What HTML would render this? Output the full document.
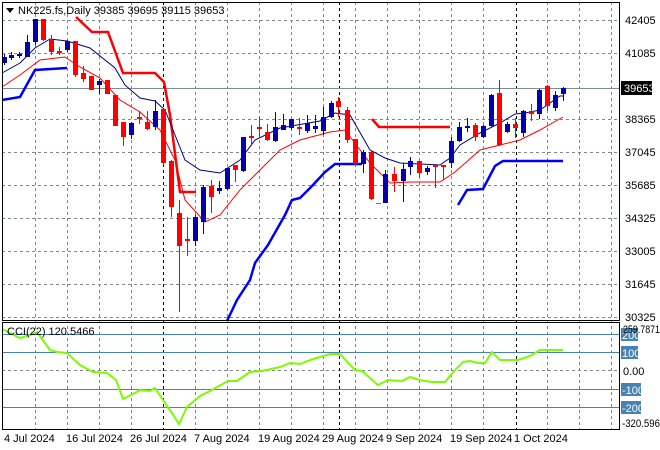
<!DOCTYPE html>
<html><head><meta charset="utf-8"><style>
html,body{margin:0;padding:0;background:#fff;width:660px;height:450px;overflow:hidden}
svg text{font-family:"Liberation Sans",sans-serif;font-size:11px;fill:#000}
</style></head><body>
<svg id="s" width="660" height="450" xmlns="http://www.w3.org/2000/svg">
<rect width="660" height="450" fill="#fff"/>
<g id="grid" stroke="#7d8791" stroke-dasharray="3,3" stroke-width="1"></g>
<g stroke="#000" stroke-dasharray="3,3" stroke-width="1">
<line x1="163.5" y1="2" x2="163.5" y2="429"/><line x1="339.5" y1="2" x2="339.5" y2="429"/><line x1="516.5" y1="2" x2="516.5" y2="429"/>
</g>
<line x1="2" y1="88.5" x2="619" y2="88.5" stroke="#7d8a99" stroke-width="1"/>
<g stroke="#4682b4" stroke-width="1">
<line x1="2" y1="334.5" x2="619" y2="334.5"/><line x1="2" y1="352.5" x2="619" y2="352.5"/><line x1="2" y1="389.5" x2="619" y2="389.5"/><line x1="2" y1="407.5" x2="619" y2="407.5"/>
</g>
<polyline fill="none" stroke="#ff0000" stroke-width="2.5" points="76,17 92,32 108,32 123,73 155,73 164,82 170,115 180,192 196,192"/>
<polyline fill="none" stroke="#ff0000" stroke-width="2.5" points="372,119 379,127 450,127"/>
<polyline fill="none" stroke="#0000ff" stroke-width="2.5" points="2,100 20,97 35,70 67,68"/>
<polyline fill="none" stroke="#0000ff" stroke-width="2.5" points="227,321 237,300 250,280 255,263 268,245 285,215 292,200 300,198 312,186 325,172 335,164 362,164"/>
<polyline fill="none" stroke="#0000ff" stroke-width="2.5" points="458,205 467,190 483,189 495,166 503,161 563,161"/>
<polyline fill="none" stroke="#000080" stroke-width="1" points="2,73 20,63 35,48 50,39 67,41 90,48 115,68 125,85 140,98 155,101 165,110 175,135 185,160 200,170 220,173 240,160 255,140 280,128 320,121 335,113 350,115 370,150 385,158 400,163 440,165 450,158 460,145 480,133 500,123 515,114 525,113 540,110 560,96 563,96"/>
<polyline fill="none" stroke="#ff0000" stroke-width="1" points="2,87 20,75 40,60 65,57 80,67 100,78 120,100 140,112 160,130 175,160 185,200 205,222 220,215 240,190 260,170 280,150 300,140 330,132 345,130 370,163 390,183 410,182 440,182 455,172 480,150 500,145 520,140 540,130 563,117"/>
<g id="c"></g>
<line x1="376" y1="203.5" x2="381" y2="203.5" stroke="#00cc00"/>
<polyline fill="none" stroke="#7cfc00" stroke-width="2" points="2,329 20,338 30,335 37,332 50,350 57,352 67,353 80,365 93,372 107,373 116,380 123,399 133,394 140,390 150,391 155,388 163,400 172,413 179,424 187,407 200,396 210,391 228,381 237,381 250,372 262,371 280,367 290,363 300,364 310,360 320,357 330,354 340,354 355,370 362,371 378,385 388,380 402,381 410,377 420,380 432,382 445,382 455,370 463,362 470,361 478,363 485,363 492,352 500,360 518,360 530,356 540,350 563,350"/>
<g fill="none" stroke="#000" stroke-width="1">
<rect x="2.5" y="2.5" width="617" height="318"/>
<rect x="2.5" y="322.5" width="617" height="107"/>
</g>
<polygon points="6,8 14,8 10,13" fill="#000"/>
<text x="18" y="14">NK225.fs,Daily  39385 39695 39115 39653</text>
<text x="7" y="335">CCI(22) 120.5466</text>
<g id="ax"></g>
<rect x="621" y="81" width="31" height="14" fill="#000"/>
<text x="624" y="92" style="fill:#fff">39653</text>
<g fill="#4682b4"><rect x="621" y="328" width="17" height="13"/><rect x="621" y="346" width="17" height="13"/><rect x="621" y="383" width="20" height="13"/><rect x="621" y="401" width="20" height="13"/></g>
<text x="622" y="339" style="fill:#fff">200</text><text x="622" y="357" style="fill:#fff">100</text>
<text x="622" y="394" style="fill:#fff">-100</text><text x="622" y="412" style="fill:#fff">-200</text>
<text x="623" y="333" textLength="37" lengthAdjust="spacingAndGlyphs">259.7871</text><text x="623" y="375">0.00</text><text x="622" y="427" textLength="38" lengthAdjust="spacingAndGlyphs">-320.596</text>
<text x="4" y="442">4 Jul 2024</text><text x="66" y="442">16 Jul 2024</text><text x="130" y="442">26 Jul 2024</text><text x="194" y="442">7 Aug 2024</text><text x="258" y="442">19 Aug 2024</text><text x="322" y="442">29 Aug 2024</text><text x="386" y="442">9 Sep 2024</text><text x="450" y="442">19 Sep 2024</text><text x="514" y="442">1 Oct 2024</text>
</svg>
<script>
var NS="http://www.w3.org/2000/svg";
function el(p,t,a){var e=document.createElementNS(NS,t);for(var k in a)e.setAttribute(k,a[k]);p.appendChild(e);return e;}
var g=document.getElementById('grid');
[20,53,119,152,185,218,251,284,317].forEach(function(y){el(g,'line',{x1:2,y1:y+.5,x2:619,y2:y+.5});});
el(g,'line',{x1:2,y1:370.5,x2:619,y2:370.5});
[35,67,99,131,195,227,259,291,323,355,387,419,451,483,547,579,611].forEach(function(x){el(g,'line',{x1:x+.5,y1:2,x2:x+.5,y2:429});});
var ax=document.getElementById('ax');
[[20,'42405'],[53,'41085'],[119,'38365'],[152,'37045'],[185,'35685'],[218,'34325'],[251,'33005'],[284,'31645'],[317,'30325']].forEach(function(a){var t=el(ax,'text',{x:625,y:a[0]+4});t.textContent=a[1];});
var C=[[4,'b',57,63,54,65],[11,'b',55,58,52,60],[19,'b',54,56,52,58],[27,'b',42,57,35,57],[35,'b',19,42,19,45],[43,'r',19,40,19,41],[51,'r',40,52,35,55],[59,'r',51,53,47,55],[67,'b',41,50,40,52],[75,'r',41,75,41,77],[83,'r',73,79,66,82],[91,'r',76,90,76,90],[99,'b',81,85,79,94],[107,'r',80,94,80,94],[115,'r',95,126,95,126],[123,'r',122,137,122,146],[131,'b',123,135,122,139],[139,'r',117,119,111,124],[147,'r',122,129,111,130],[155,'b',111,127,100,130],[163,'r',109,163,109,165],[171,'r',161,207,160,217],[179,'r',213,246,200,312],[187,'r',239,241,217,256],[195,'b',217,241,215,246],[203,'b',187,222,185,234],[211,'r',186,197,180,213],[219,'b',188,191,181,194],[227,'b',168,189,168,190],[235,'r',165,170,165,182],[243,'b',137,171,137,172],[251,'r',136,138,125,146],[259,'r',127,129,117,138],[267,'r',132,140,124,141],[275,'b',127,141,112,142],[283,'b',125,130,114,130],[291,'b',119,128,119,130],[299,'r',127,129,118,135],[307,'b',123,131,115,133],[315,'b',126,129,115,133],[323,'b',117,131,107,135],[331,'b',103,117,101,118],[338,'r',101,107,97,117],[347,'r',110,140,107,143],[355,'r',139,164,139,165],[363,'b',152,164,150,173],[371,'r',152,199,150,200],[385,'b',174,203,170,203],[394,'r',174,181,167,192],[403,'b',169,181,163,202],[410,'b',161,167,157,175],[419,'r',161,173,161,178],[427,'b',168,172,166,175],[435,'r',165,167,165,188],[443,'r',165,167,165,180],[451,'b',141,163,137,168],[459,'b',127,141,122,142],[467,'b',126,128,118,132],[475,'r',125,137,123,141],[483,'b',126,137,125,138],[491,'b',95,126,94,127],[499,'r',93,145,80,146],[507,'b',124,132,122,133],[515,'r',124,128,118,138],[523,'b',111,133,110,137],[531,'r',111,114,104,121],[539,'b',90,114,89,119],[547,'r',86,106,85,111],[555,'b',95,108,91,111],[563,'b',88,94,87,101]];
var cg=document.getElementById('c');
C.forEach(function(c){var col=c[1]=='b'?'#0000b0':'#ff0000';
el(cg,'line',{x1:c[0]+.5,y1:c[4],x2:c[0]+.5,y2:c[5],stroke:col,'stroke-width':1});
var h=Math.max(1,c[3]-c[2]);el(cg,'rect',{x:c[0]-2,y:c[2],width:5,height:h,fill:col});});
</script>
</body></html>
